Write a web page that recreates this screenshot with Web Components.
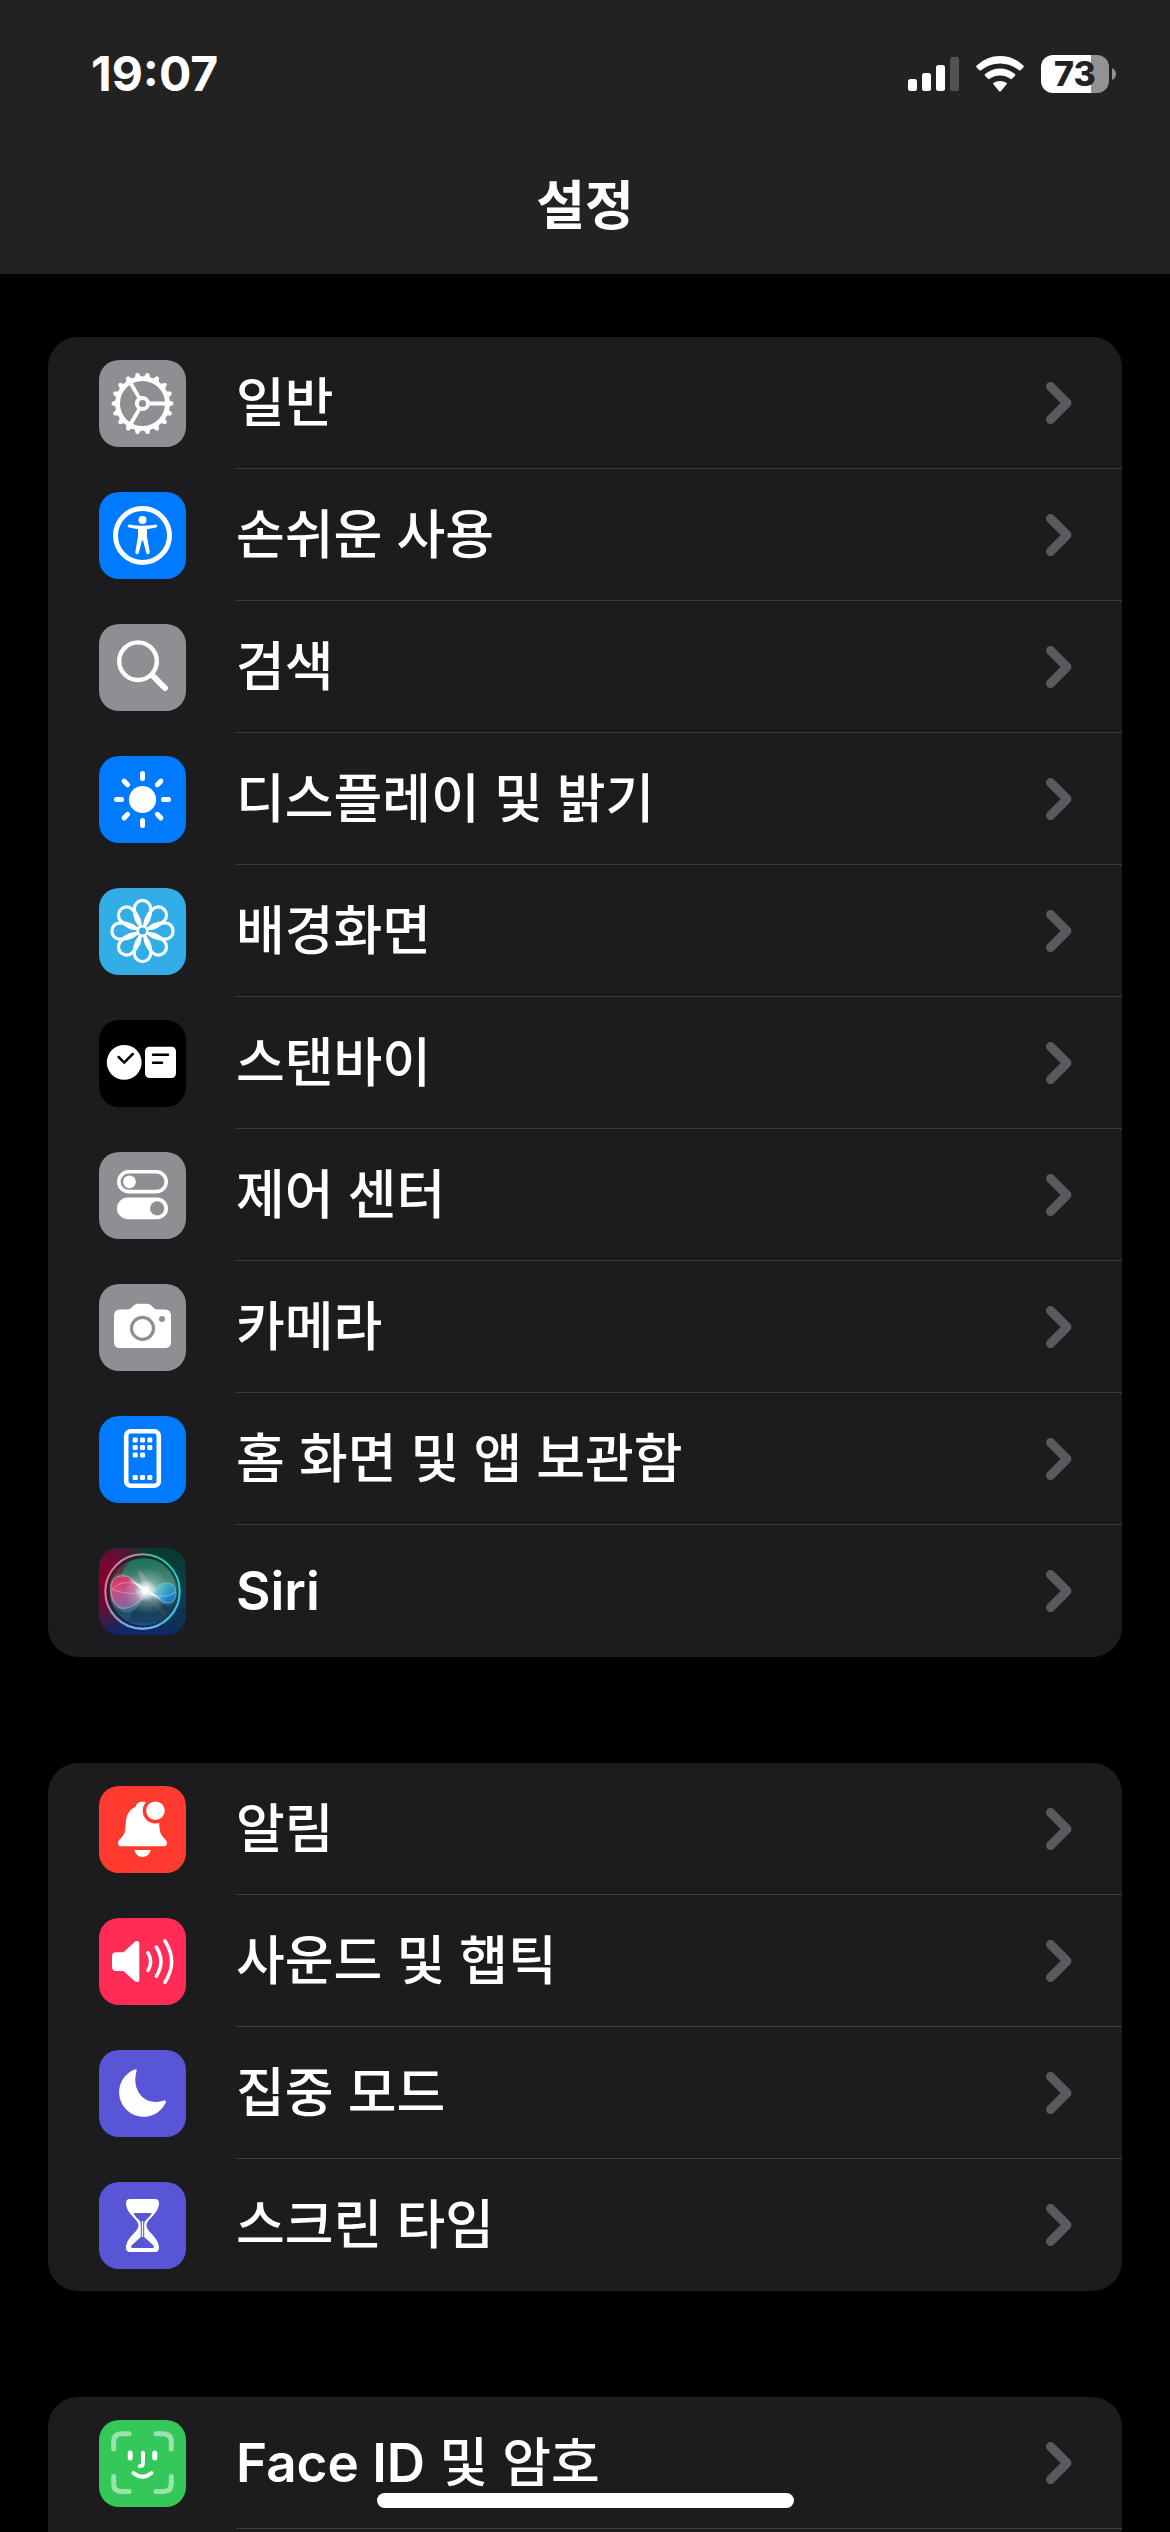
<!DOCTYPE html>
<html lang="ko">
<head>
<meta charset="utf-8">
<meta name="viewport" content="width=device-width, initial-scale=1">
<title>설정</title>
<style>
    html, body {
        margin: 0;
        height: 100%;
        background: #000;
    }

    body {
        font-family: Inter, "Noto Sans CJK KR", sans-serif;
        color: #fff;
        --bar-color: #222;
        --card-color: #1c1c1e;
        --line-color: #3d3d40;
        --chevron-color: #5a5a5e;
    }

    /* latin words look thin next to the hangul */
    b {
        font-weight: 600;
    }
</style>
</head>
<body>
<settings-screen>
    <status-bar slot="top" time="19:07" battery="73"></status-bar>
    <nav-title slot="top">설정</nav-title>

    <settings-group>
        <settings-row icon="gear" color="#8e8e93">일반</settings-row>
        <settings-row icon="accessibility" color="#007aff">손쉬운 사용</settings-row>
        <settings-row icon="search" color="#8e8e93">검색</settings-row>
        <settings-row icon="sun" color="#007aff">디스플레이 및 밝기</settings-row>
        <settings-row icon="flower" color="#32ade6">배경화면</settings-row>
        <settings-row icon="standby" color="#000">스탠바이</settings-row>
        <settings-row icon="toggles" color="#8e8e93">제어 센터</settings-row>
        <settings-row icon="camera" color="#8e8e93">카메라</settings-row>
        <settings-row icon="home" color="#007aff">홈 화면 및 앱 보관함</settings-row>
        <settings-row icon="siri" color="#16263c" last><b>Siri</b></settings-row>
    </settings-group>

    <settings-group>
        <settings-row icon="bell" color="#ff3b30">알림</settings-row>
        <settings-row icon="speaker" color="#ff2d55">사운드 및 햅틱</settings-row>
        <settings-row icon="moon" color="#5856d6">집중 모드</settings-row>
        <settings-row icon="hourglass" color="#5856d6" last>스크린 타임</settings-row>
    </settings-group>

    <settings-group open>
        <settings-row icon="face" color="#34c759"><b>Face ID</b> 및 암호</settings-row>
    </settings-group>
</settings-screen>

<script>
// repeat a shape n times round the middle of the icon
const around = (n, shape, cy = 43.5) =>
    Array.from({ length: n }, (_, i) => `<g transform="translate(43.5 ${cy}) rotate(${i * 360 / n})">${shape}</g>`).join('')

// all icons are drawn in an 87 x 87 box, `currentColor` is the tile behind
const icons = {
    gear: `
        <circle cx="43.5" cy="43.5" r="24.9" fill="none" stroke="#fff" stroke-width="4.8"/>
        ${around(18, '<path d="M26 -3.4 L30.5 -1.6 Q31.6 0 30.5 1.6 L26 3.4Z" fill="#fff"/>')}
        ${around(3, '<path d="M5 0H24" stroke="#fff" stroke-width="3.8"/>')}
        <circle cx="43.5" cy="43.5" r="5.6" fill="currentColor" stroke="#fff" stroke-width="4"/>`,
    accessibility: `
        <circle cx="43.5" cy="43.5" r="27" fill="none" stroke="#fff" stroke-width="5"/>
        <circle cx="43.5" cy="28" r="4" fill="#fff"/>
        <path d="M30.4 32.5 Q43.5 35 56.6 32.5 Q58.4 32.6 58.3 34.2 Q58.2 35.2 57 35.5 L48 37.3 V44.5 L50.7 60 Q50.7 62 49.2 62.2 Q47.8 62.3 47.3 61 L44 48.5 H43 L39.7 61 Q39.2 62.3 37.8 62.2 Q36.3 62 36.3 60 L39 44.5 V37.3 L30 35.5 Q28.8 35.2 28.7 34.2 Q28.6 32.6 30.4 32.5Z" fill="#fff"/>`,
    search: `
        <circle cx="39" cy="37.2" r="18.8" fill="none" stroke="#fff" stroke-width="4.4"/>
        <path d="M53.5 51.5 L66 64" stroke="#fff" stroke-width="6" stroke-linecap="round"/>`,
    sun: `
        <circle cx="43.5" cy="43.5" r="13.6" fill="#fff"/>
        ${around(8, '<path d="M0 -26 V-21" stroke="#fff" stroke-width="5" stroke-linecap="round"/>')}`,
    flower: around(8, '<path d="M0 -3 C-3 -7 -8.2 -10 -8.2 -22.4 A8.2 8.2 0 0 1 8.2 -22.4 C8.2 -10 3 -7 0 -3Z" fill="none" stroke="#fff" stroke-width="3.2"/>', 43)
        + '<circle cx="43.5" cy="43" r="4.4" fill="currentColor" stroke="#fff" stroke-width="1.8"/>',
    standby: `
        <circle cx="25.2" cy="42.4" r="17.4" fill="#fff"/>
        <rect x="46" y="26.7" width="31" height="31.3" rx="4.5" fill="#fff"/>
        <path d="M19.6 37 L25.2 42.6 L33.8 34 M54 34.8 H69 M54 42.8 H63" fill="none" stroke="#000" stroke-width="2.5" stroke-linecap="round" stroke-linejoin="miter"/>`,
    toggles: `
        <rect x="19.8" y="19.8" width="47.4" height="19.8" rx="9.9" fill="none" stroke="#fff" stroke-width="3.6"/>
        <circle cx="30.5" cy="29.8" r="6.4" fill="#fff"/>
        <rect x="18" y="45.6" width="51" height="21.6" rx="10.8" fill="#fff"/>
        <circle cx="58.2" cy="56.4" r="7.1" fill="currentColor"/>`,
    camera: `
        <path d="M21 25.5 H28 Q31 25.5 33 23.3 L34.7 21.5 Q36.5 19.7 39 19.7 H48 Q50.5 19.7 52.3 21.5 L54 23.3 Q56 25.5 59 25.5 H66 Q72 25.5 72 31.5 V58 Q72 64 66 64 H21 Q15 64 15 58 V31.5 Q15 25.5 21 25.5Z" fill="#fff"/>
        <circle cx="43.5" cy="44.4" r="11" fill="none" stroke="currentColor" stroke-width="3.2"/>
        <circle cx="63" cy="35" r="3" fill="currentColor"/>`,
    home: `
        <rect x="27.2" y="15.2" width="32.6" height="54.6" rx="4.5" fill="none" stroke="#fff" stroke-width="4.6"/>
        ${[[0, 0], [1, 0], [2, 0], [0, 1], [1, 1], [2, 1], [0, 2], [1, 2], [0, 5], [1, 5], [2, 5]]
            .map(([c, r]) => `<rect x="${33.7 + c * 7.3}" y="${21.5 + r * 7.5}" width="5" height="5" rx="1.2" fill="#fff"/>`).join('')}`,
    siri: `
        <defs>
            <radialGradient id="left" cx="0" cy="0.35" r="0.65"><stop offset="0" stop-color="#860030"/><stop offset="0.5" stop-color="#680b35"/><stop offset="1" stop-color="#680b35" stop-opacity="0"/></radialGradient>
            <linearGradient id="back" x1="0.6" y1="0" x2="0.5" y2="1"><stop offset="0" stop-color="#073b2e"/><stop offset="0.5" stop-color="#0c3d4c"/><stop offset="0.85" stop-color="#0c3156"/><stop offset="1" stop-color="#10246b"/></linearGradient>
            <linearGradient id="rim" x1="0" y1="0.4" x2="1" y2="0.6"><stop offset="0" stop-color="#e8718d"/><stop offset="0.35" stop-color="#a5969f"/><stop offset="0.7" stop-color="#27c58b"/><stop offset="1" stop-color="#25cfdf"/></linearGradient>
            <linearGradient id="low" x1="0" y1="0" x2="0" y2="1"><stop offset="0.55" stop-color="#4f9df5" stop-opacity="0"/><stop offset="1" stop-color="#6eabff"/></linearGradient>
            <linearGradient id="orb" x1="0.45" y1="0" x2="0.55" y2="1"><stop offset="0" stop-color="#177a5a"/><stop offset="0.45" stop-color="#5f8f84"/><stop offset="0.75" stop-color="#204d66"/><stop offset="1" stop-color="#1d5ba6"/></linearGradient>
            <linearGradient id="pink" x1="0" y1="0" x2="0.3" y2="1"><stop offset="0" stop-color="#f12558"/><stop offset="0.5" stop-color="#db4680"/><stop offset="1" stop-color="#8d64ae"/></linearGradient>
            <linearGradient id="blue" x1="0" y1="0" x2="0.4" y2="1"><stop offset="0" stop-color="#46bfc5"/><stop offset="1" stop-color="#197fd5"/></linearGradient>
            <radialGradient id="glow"><stop offset="0" stop-color="#fff"/><stop offset="0.25" stop-color="#fff" stop-opacity="0.95"/><stop offset="0.5" stop-color="#dffcf5" stop-opacity="0.5"/><stop offset="1" stop-color="#bff" stop-opacity="0"/></radialGradient>
        </defs>
        <rect width="87" height="87" fill="url(#back)"/>
        <rect width="87" height="87" fill="url(#left)"/>
        <circle cx="43.5" cy="43.5" r="37" fill="#152431" opacity="0.5"/>
        <circle cx="45" cy="44" r="34" fill="url(#orb)" opacity="0.9"/>
        <path d="M10 42 Q9 20 30 15 Q21 25 22 30 Q13 34 10 42Z" fill="#61273d" opacity="0.8"/>
        <path d="M47 43 L38 22 Q48 25 52 42 L68 68 Q54 62 47 43Z" fill="#bf8d95" opacity="0.45"/>
        <path d="M29 73 Q36 55 51 47 Q60 57 74 60 Q60 82 29 73Z" fill="#173b50" opacity="0.65"/>
        <path d="M48 44 C38 31 24 20 14 30 C7 41 15 66 30 64 C39 62 43 52 48 44Z" fill="#489da2" opacity="0.45" stroke="#55a8a6" stroke-width="0.8"/>
        <path d="M48 44 C38 37 32 26 21 28 C10 31 10 44 15 54 C22 66 36 60 48 44Z" fill="url(#pink)" stroke="#ff98b8" stroke-width="0.9" opacity="0.85"/>
        <path d="M47 43 C35 46 28 47 13 41 M47 43 C33 31 20 33 13 42" fill="none" stroke="#ff9eb1" stroke-width="0.8" opacity="0.7"/>
        <path d="M50 44 C58 42 60 35 68 35 C80 35 80 55 69 55 C61 55 58 47 50 44Z" fill="url(#blue)" opacity="0.85" stroke="#5ed6f2" stroke-width="0.9"/>
        <path d="M50 44 C60 50 69 49 77 44" fill="none" stroke="#66cbff" stroke-width="0.8"/>
        <path d="M30 31 L47 40 L48 46 Z M51 43 L63 52 L50 46Z" fill="#fff" opacity="0.85"/>
        <circle cx="48" cy="43" r="23" fill="url(#glow)" opacity="0.6"/>
        <circle cx="46.5" cy="42.5" r="11" fill="url(#glow)"/>
        <circle cx="43.5" cy="43.5" r="34.5" fill="none" stroke="#0a2b2b" stroke-width="2" opacity="0.4"/>
        <circle cx="43.5" cy="43.5" r="37.2" fill="none" stroke="url(#rim)" stroke-width="2.1"/>
        <circle cx="43.5" cy="43.5" r="37.2" fill="none" stroke="url(#low)" stroke-width="2.1"/>`,
    bell: `
        <path d="M19 57 c0-3 5-6 6.5-10 c1-3 1-7 1.5-12 c.6-7 4-12 9.5-14 c.7-3.5 3.5-5.3 7-5.3 s6.3 1.8 7 5.3 c5.5 2 8.5 7 9.5 14 c.5 5 .3 9 1.5 12 c1.5 4 6.5 7 6.5 10 c0 2-1 3.2-3 3.2 H22 c-2 0-3-1.2-3-3.2z M35.5 64 H51.7 Q50 71 43.6 71 Q37 71 35.5 64Z" fill="#fff"/>
        <circle cx="56.4" cy="24.7" r="11" fill="#fff" stroke="currentColor" stroke-width="3.4"/>`,
    speaker: `
        <path d="M17 34.3 H24.5 L35.5 24 Q37.5 22.6 39.2 23.2 Q40.3 23.7 40.3 25.5 V61.5 Q40.3 63.3 39.2 63.9 Q37.5 64.5 35.5 63 L24.5 53 H17 Q13 53 13 49 V38.3 Q13 34.3 17 34.3Z" fill="#fff"/>
        <path d="M49 34.8 Q54.2 43.6 49 52.4 M57.3 29 Q66.6 43.6 57.3 58.2 M66 23 Q79.2 43.6 66 64.2" fill="none" stroke="#fff" stroke-width="3.5" stroke-linecap="round"/>`,
    moon: `
        <path d="M35 19.7 Q38.3 18.2 37.6 21 C33 36 41 52 57 52 Q61 52 65 50.6 Q67.6 50 66.8 52.6 A24.5 24.5 0 1 1 35 19.7Z" fill="#fff"/>`,
    hourglass: `
        <path d="M31 17 H56 Q60 17 60 21 C60 32 47.5 37 47.5 43.5 C47.5 50 60 55 60 66 Q60 70 56 70 H31 Q27 70 27 66 C27 55 39.5 50 39.5 43.5 C39.5 37 27 32 27 21 Q27 17 31 17Z" fill="#fff"/>
        <path d="M34.3 31 H53 Q51 34.5 47 38 Q45.2 39.5 45.2 42 V55 L54.5 63.5 Q55.5 66 53.5 66 H33.5 Q31.5 66 32.5 63.5 L41.8 55 V42 Q41.8 39.5 40 38 Q36 34.5 34.3 31Z" fill="currentColor"/>
        <path d="M43.5 39 V55" stroke="#fff" stroke-width="1.3"/>`,
    face: `
        <g fill="none" stroke="#fff" stroke-linecap="round">
            <path d="M14.7 29 V22 Q14.7 13.7 23 13.7 H30 M57 13.7 H64 Q72.3 13.7 72.3 22 V29 M72.3 56.5 V63.5 Q72.3 71.5 64 71.5 H57 M30 71.5 H23 Q14.7 71.5 14.7 63.5 V56.5" stroke-width="5" opacity="0.5"/>
            <path d="M31.2 33 V38 M55.8 33 V38" stroke-width="5"/>
            <path d="M44 32.7 V43 Q44 46.2 40.8 46.2 M34.5 53 Q43.5 60.5 52.5 53" stroke-width="4"/>
        </g>`
}

class SettingsScreen extends HTMLElement {
    constructor() {
        super()
        this.attachShadow({ mode: 'open' }).innerHTML = `
<style>
    :host {
        display: flex;
        flex-direction: column;
        height: 100vh;
        overflow: hidden;
    }

    header {
        background: var(--bar-color);
        padding-bottom: 10px;
    }

    main {
        flex: 1;
        min-height: 0;
        display: flex;
        flex-direction: column;
        gap: 106px;
        padding: 63px 48px 0;
    }

    .home-indicator {
        position: fixed;
        bottom: 24px;
        left: 0;
        right: 0;
        width: 417px;
        height: 15px;
        margin: auto;
        border-radius: 8px;
        background: #fff;
    }
</style>
<header><slot name="top"></slot></header>
<main><slot></slot></main>
<div class="home-indicator"></div>`
    }
}

class StatusBar extends HTMLElement {
    connectedCallback() {
        this.attachShadow({ mode: 'open' }).innerHTML = `
<style>
    :host {
        display: flex;
        align-items: center;
        justify-content: space-between;
        height: 148px;
        padding: 0 54px 0 91px;
    }

    .time {
        font-size: 48px;
        font-weight: 700;
        line-height: 56px;
    }

    .right {
        display: flex;
        align-items: center;
        gap: 17px;
    }

    svg {
        display: block;
    }

    .battery {
        display: flex;
        align-items: center;
        gap: 3px;
    }

    .level {
        width: 68px;
        border-radius: 12px;
        background: linear-gradient(90deg, #fff var(--level), #929292 var(--level));
        color: var(--bar-color);
        font-size: 34px;
        font-weight: 800;
        line-height: 38px;
        text-align: center;
    }
</style>
<span class="time"></span>
<div class="right">
    <svg width="51" height="34" viewBox="0 0 51 34" fill="#fff">
        <rect y="22" width="9" height="12" rx="2.5"/>
        <rect x="14" y="16" width="9" height="18" rx="2.5"/>
        <rect x="28" y="8" width="9" height="26" rx="2.5"/>
        <rect x="42" width="9" height="34" rx="2.5" opacity="0.22"/>
    </svg>
    <svg width="48" height="36" viewBox="0 0 48 36" fill="#fff">
        <path d="M0.6 11.4 Q-0.2 10.5 0.7 9.6 Q10.5 0 24 0 Q37.5 0 47.3 9.6 Q48.2 10.5 47.4 11.4 L44.6 14.2 Q43.8 15 42.9 14.2 Q34.8 7.4 24 7.4 Q13.2 7.4 5.1 14.2 Q4.2 15 3.4 14.2Z"/>
        <path d="M9 19.8 Q8.2 18.9 9.1 18.1 Q15.5 12.5 24 12.5 Q32.5 12.5 38.9 18.1 Q39.8 18.9 39 19.8 L36 22.8 Q35.2 23.5 34.3 22.8 Q29.8 19.4 24 19.4 Q18.2 19.4 13.7 22.8 Q12.8 23.5 12 22.8Z"/>
        <path d="M17.4 28.3 Q16.7 27.5 17.6 26.8 Q20.4 25 24 25 Q27.6 25 30.4 26.8 Q31.3 27.5 30.6 28.3 L25 35 Q24 36 23 35Z"/>
    </svg>
    <div class="battery">
        <div class="level"></div>
        <svg width="4" height="12" viewBox="0 0 4 12"><path d="M0 0 Q4 2 4 6 T0 12Z" fill="#929292"/></svg>
    </div>
</div>`
        const level = this.shadowRoot.querySelector('.level')
        level.textContent = this.getAttribute('battery')
        level.style.setProperty('--level', this.getAttribute('battery') + '%')
        this.shadowRoot.querySelector('.time').textContent = this.getAttribute('time')
    }
}

class NavTitle extends HTMLElement {
    constructor() {
        super()
        this.attachShadow({ mode: 'open' }).innerHTML = `
<style>
    :host {
        display: block;
    }

    h1 {
        margin: 0;
        font-size: 53px;
        font-weight: 700;
        line-height: 116px;
        text-align: center;
    }
</style>
<h1><slot></slot></h1>`
    }
}

class SettingsGroup extends HTMLElement {
    constructor() {
        super()
        this.attachShadow({ mode: 'open' }).innerHTML = `
<style>
    :host {
        display: block;
        flex: none;
        border-radius: 30px;
        background: var(--card-color);
        overflow: hidden;
    }

    /* carries on below the edge of the screen */
    :host([open]) {
        flex: 1 0 auto;
        border-radius: 30px 30px 0 0;
    }
</style>
<slot></slot>`
    }
}

class SettingsRow extends HTMLElement {
    connectedCallback() {
        this.attachShadow({ mode: 'open' }).innerHTML = `
<style>
    :host {
        display: block;
    }

    a {
        display: flex;
        align-items: center;
        gap: 50px;
        padding-left: 51px;
        color: inherit;
        text-decoration: none;
    }

    .icon {
        flex: none;
        width: 87px;
        height: 87px;
        border-radius: 20px;
        overflow: hidden;
    }

    .icon svg {
        display: block;
    }

    .body {
        flex: 1;
        display: flex;
        align-items: center;
        justify-content: space-between;
        box-sizing: border-box;
        height: 132px;
        padding-right: 50px;
        border-bottom: 1px solid var(--line-color);
        font-size: 53px;
        font-weight: 500;
        line-height: 64px;
    }

    :host([last]) .body {
        border-bottom-color: transparent;
    }
</style>
<a href="#">
    <span class="icon"><svg width="87" height="87" viewBox="0 0 87 87" aria-hidden="true"></svg></span>
    <span class="body">
        <span><slot></slot></span>
        <svg width="26" height="42" viewBox="0 0 26 42" aria-hidden="true">
            <path d="M4.5 4.5 L21 21 L4.5 37.5" fill="none" stroke="var(--chevron-color)" stroke-width="9" stroke-linecap="round" stroke-linejoin="round"/>
        </svg>
    </span>
</a>`
        const tile = this.shadowRoot.querySelector('.icon')
        tile.style.background = tile.style.color = this.getAttribute('color')
        tile.firstChild.innerHTML = icons[this.getAttribute('icon')]
    }
}

customElements.define('settings-screen', SettingsScreen)
customElements.define('status-bar', StatusBar)
customElements.define('nav-title', NavTitle)
customElements.define('settings-group', SettingsGroup)
customElements.define('settings-row', SettingsRow)
</script>
</body>
</html>
